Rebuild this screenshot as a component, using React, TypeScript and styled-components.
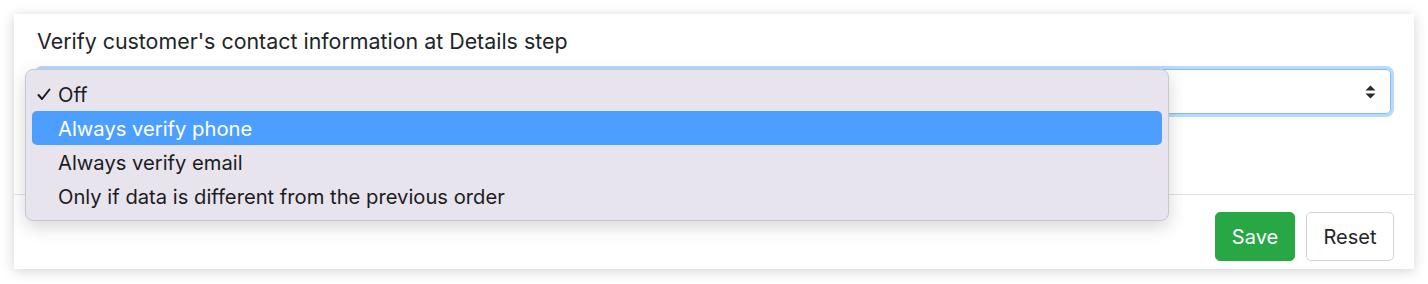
import styled, { createGlobalStyle } from "styled-components";

const GlobalStyle = createGlobalStyle`
  html, body {
    margin: 0;
    padding: 0;
    background: #ffffff;
  }
  body {
    font-family: Inter, "Liberation Sans", Arial, sans-serif;
    color: #212529;
  }
`;

const Page = styled.div`
  padding: 14px;
  width: 1400px;
`;

const Card = styled.div`
  width: 1400px;
  background: #ffffff;
  box-shadow: 0 2px 12px rgba(0, 0, 0, 0.18);
`;

const Body = styled.div`
  padding: 13px 23px 0 23px;
  height: 180px;
  box-sizing: border-box;
  position: relative;
`;

const Label = styled.div`
  font-size: 21.4px;
  line-height: 28px;
  color: #212529;
  margin-bottom: 14px;
`;

const SelectBox = styled.div`
  height: 45px;
  box-sizing: border-box;
  border: 1px solid #80bdff;
  border-radius: 5px;
  box-shadow: 0 0 0 3px rgba(0, 123, 255, 0.28);
  display: flex;
  align-items: center;
  justify-content: flex-end;
  padding-right: 14px;
`;

const Popup = styled.div`
  position: absolute;
  left: 11px;
  top: 55px;
  width: 1144px;
  box-sizing: border-box;
  padding: 7px 6px;
  background: #e8e4ee;
  border: 1px solid #c9c6cd;
  border-radius: 8px;
  box-shadow: 0 6px 18px rgba(0, 0, 0, 0.16);
  z-index: 2;
`;

const Option = styled.div<{ $active?: boolean }>`
  height: 34px;
  display: flex;
  align-items: center;
  position: relative;
  padding-left: 26px;
  font-size: 20.2px;
  border-radius: 5px;
  color: ${(p) => (p.$active ? "#ffffff" : "#1c1c1e")};
  background: ${(p) => (p.$active ? "#4c9ffe" : "transparent")};
`;

const Check = styled.span`
  position: absolute;
  left: 5px;
  top: 0;
  height: 34px;
  display: flex;
  align-items: center;
`;

const Footer = styled.div`
  border-top: 1px solid #dee2e6;
  padding: 17px 20px 8px 0;
  display: flex;
  justify-content: flex-end;
  gap: 11px;
`;

const Button = styled.button<{ $variant: "save" | "reset" }>`
  height: 49px;
  box-sizing: border-box;
  padding: 0;
  font-family: Inter, "Liberation Sans", Arial, sans-serif;
  font-size: 20px;
  border-radius: 5px;
  border: 1px solid ${(p) => (p.$variant === "save" ? "#28a745" : "#ced4da")};
  background: ${(p) => (p.$variant === "save" ? "#28a745" : "#ffffff")};
  color: ${(p) => (p.$variant === "save" ? "#ffffff" : "#212529")};
  width: ${(p) => (p.$variant === "save" ? "80px" : "88px")};
`;

const options = [
  "Off",
  "Always verify phone",
  "Always verify email",
  "Only if data is different from the previous order",
];

export default function App() {
  return (
    <>
      <GlobalStyle />
      <Page>
        <Card>
          <Body>
            <Label>Verify customer's contact information at Details step</Label>
            <SelectBox>
              <svg width="11" height="14" viewBox="0 0 11 14">
                <path d="M5.5 0.5 L10.5 5.5 L0.5 5.5 Z" fill="#2b2b2b" />
                <path d="M5.5 13.5 L10.5 8.5 L0.5 8.5 Z" fill="#2b2b2b" />
              </svg>
            </SelectBox>
            <Popup>
              {options.map((o, i) => (
                <Option key={o} $active={i === 1}>
                  {i === 0 && (
                    <Check>
                      <svg width="14" height="13" viewBox="0 0 14 13">
                        <path
                          d="M1.5 7 L5 11 L12.5 1.5"
                          fill="none"
                          stroke="#1c1c1e"
                          strokeWidth="2"
                          strokeLinecap="round"
                          strokeLinejoin="round"
                        />
                      </svg>
                    </Check>
                  )}
                  {o}
                </Option>
              ))}
            </Popup>
          </Body>
          <Footer>
            <Button $variant="save">Save</Button>
            <Button $variant="reset">Reset</Button>
          </Footer>
        </Card>
      </Page>
    </>
  );
}
